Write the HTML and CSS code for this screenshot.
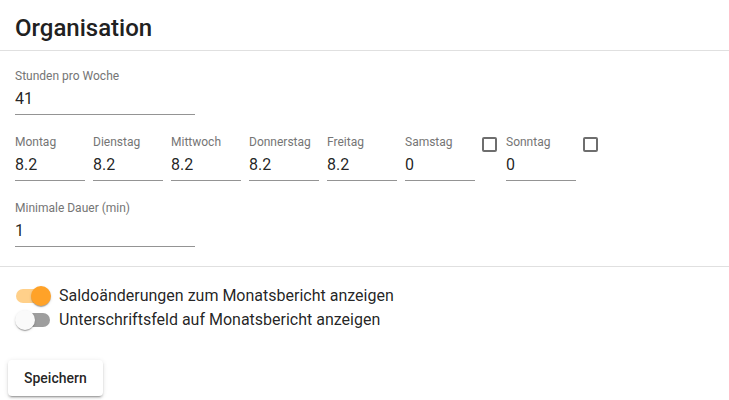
FILE: index.html
```html
<!DOCTYPE html>
<html lang="de">
<head>
<meta charset="UTF-8" />
<title>Organisation</title>
<link rel="stylesheet" href="styles.css">
</head>
<body>
<div class="card">
  <div class="card-header">
    <h1>Organisation</h1>
  </div>

  <div class="form-section">
    <div class="field wide">
      <label>Stunden pro Woche</label>
      <div class="input">41</div>
    </div>

    <div class="day-row">
      <div class="field day">
        <label>Montag</label>
        <div class="input">8.2</div>
      </div>
      <div class="field day">
        <label>Dienstag</label>
        <div class="input">8.2</div>
      </div>
      <div class="field day">
        <label>Mittwoch</label>
        <div class="input">8.2</div>
      </div>
      <div class="field day">
        <label>Donnerstag</label>
        <div class="input">8.2</div>
      </div>
      <div class="field day">
        <label>Freitag</label>
        <div class="input">8.2</div>
      </div>
      <div class="field day">
        <label>Samstag</label>
        <div class="input">0</div>
      </div>
      <span class="checkbox"></span>
      <div class="field day">
        <label>Sonntag</label>
        <div class="input">0</div>
      </div>
      <span class="checkbox"></span>
    </div>

    <div class="field wide">
      <label>Minimale Dauer (min)</label>
      <div class="input">1</div>
    </div>
  </div>

  <div class="switch-section">
    <div class="switch-row">
      <span class="switch on"><span class="track"></span><span class="thumb"></span></span>
      <span>Saldoänderungen zum Monatsbericht anzeigen</span>
    </div>
    <div class="switch-row">
      <span class="switch"><span class="track"></span><span class="thumb"></span></span>
      <span>Unterschriftsfeld auf Monatsbericht anzeigen</span>
    </div>
  </div>

  <div class="card-actions">
    <button class="save-button">Speichern</button>
  </div>
</div>
</body>
</html>
```

FILE: styles.css
```css
body {
  margin: 0;
  font-family: Roboto, "Liberation Sans", sans-serif;
  background: #fff;
  color: rgba(0, 0, 0, 0.87);
}

.card {
  width: 729px;
  height: 400px;
  overflow: hidden;
}

.card-header {
  padding: 12px 15px 6px;
  border-bottom: 1px solid #e0e0e0;
}

h1 {
  margin: 0;
  font-size: 24px;
  line-height: 32px;
  font-weight: 500;
  color: #212121;
}

.form-section {
  padding: 18px 15px 19px;
  display: flex;
  flex-direction: column;
  gap: 20px;
  border-bottom: 1px solid #e0e0e0;
}

.field label {
  display: block;
  font-size: 12px;
  line-height: 14px;
  color: #757575;
}

.field .input {
  margin-top: 6px;
  font-size: 16px;
  line-height: 19px;
  padding-bottom: 6px;
  border-bottom: 1px solid #949494;
}

.field.wide {
  width: 180px;
}

.day-row {
  display: flex;
  gap: 8px;
  align-items: flex-start;
}

.field.day {
  width: 70px;
}

.checkbox {
  width: 15px;
  height: 15px;
  box-sizing: border-box;
  border: 2px solid #6e6e6e;
  border-radius: 2px;
  margin: 2px 1px 0 -1px;
}

.switch-section {
  padding: 17px 15px 0;
}

.switch-row {
  display: flex;
  align-items: center;
  gap: 8px;
  height: 24px;
  font-size: 16px;
  line-height: 24px;
}

.switch {
  position: relative;
  width: 36px;
  height: 20px;
  flex: none;
}

.switch .track {
  position: absolute;
  left: 1px;
  top: 3px;
  width: 34px;
  height: 14px;
  border-radius: 7px;
  background: #9e9e9e;
}

.switch .thumb {
  position: absolute;
  left: 0;
  top: 0;
  width: 20px;
  height: 20px;
  border-radius: 50%;
  background: #fafafa;
  box-shadow: 0 2px 1px -1px rgba(0, 0, 0, 0.2), 0 1px 1px 0 rgba(0, 0, 0, 0.14), 0 1px 3px 0 rgba(0, 0, 0, 0.12);
}

.switch.on .track {
  background: #ffd08a;
}

.switch.on .thumb {
  left: 16px;
  background: #ffa228;
}

.card-actions {
  padding: 28px 8px 8px;
}

.save-button {
  font-family: Roboto, "Liberation Sans", sans-serif;
  font-size: 14px;
  font-weight: 500;
  line-height: 24px;
  padding: 6px 16px;
  border: none;
  border-radius: 4px;
  background: #fff;
  color: rgba(0, 0, 0, 0.87);
  box-shadow: 0 3px 1px -2px rgba(0, 0, 0, 0.2), 0 2px 2px 0 rgba(0, 0, 0, 0.14), 0 1px 5px 0 rgba(0, 0, 0, 0.12);
  cursor: pointer;
}
```
